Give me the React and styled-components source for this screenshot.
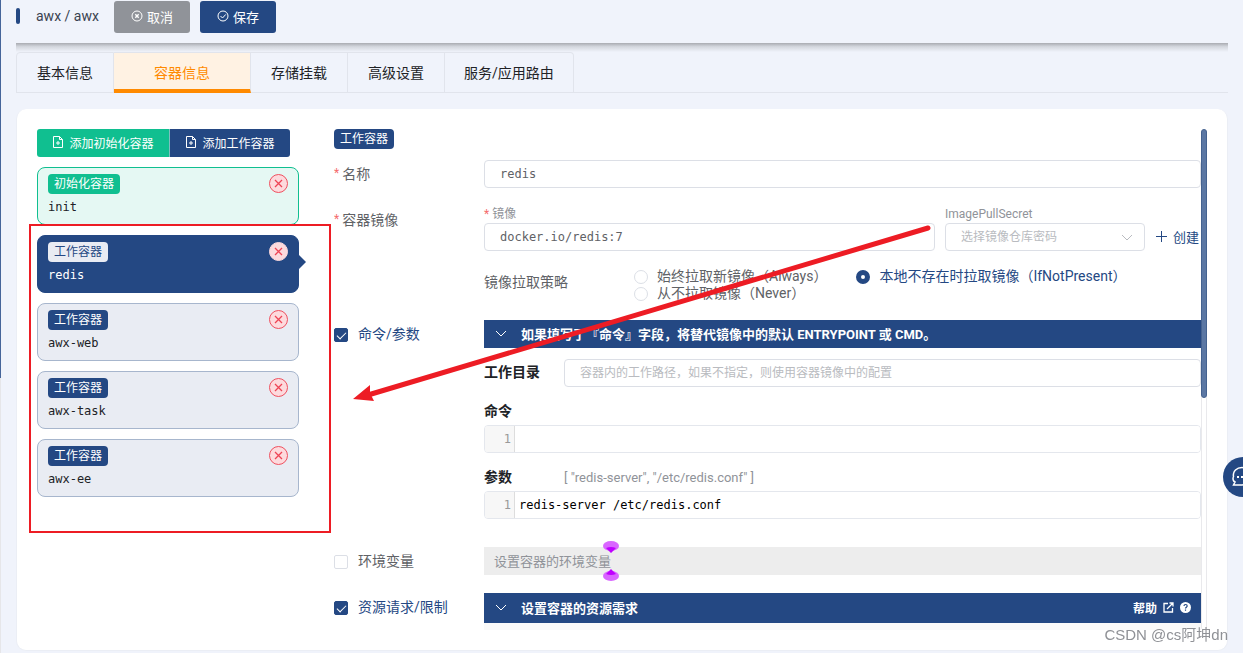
import React from 'react';
import { useState } from 'react';
import styled, { createGlobalStyle } from 'styled-components';

const NAVY = '#244883';
const GREEN = '#10bf90';
const LINE = '#dcdfe6';
const MONO = "'DejaVu Sans Mono', 'Noto Sans CJK SC', monospace";

const GlobalStyle = createGlobalStyle`
  * {
    box-sizing: border-box;
  }
  body {
    margin: 0;
    background-color: #f0f3fb;
    color: #202226;
    font-family: Roboto, 'Noto Sans CJK SC', sans-serif;
    font-size: 14px;
    overflow: hidden;
  }
  button,
  input,
  select {
    font-family: inherit;
    margin: 0;
  }
  button {
    border: none;
    padding: 0;
    cursor: pointer;
  }
`;

const Page = styled.div`
  display: flex;
  min-height: 100vh;
`;

const Rail = styled.div`
  width: 1px;
  background: linear-gradient(to bottom, #46659a 378px, #e6e6e9 378px);
`;

const Main = styled.main`
  flex: 1;
  min-width: 0;
  padding: 0 15px 0 15px;
`;

const Header = styled.header`
  display: flex;
  align-items: flex-start;
  height: 43px;
  padding-top: 1px;
`;

const Marker = styled.span`
  width: 4px;
  height: 16px;
  margin: 7px 16px 0 0;
  border-radius: 2px;
  background-color: ${NAVY};
`;

const Title = styled.h1`
  margin: 0 15px 0 0;
  font-size: 14px;
  font-weight: 400;
  line-height: 31px;
  color: #3a4250;
`;

const HeaderButton = styled.button`
  display: flex;
  align-items: center;
  justify-content: center;
  gap: 4px;
  width: 76px;
  height: 32px;
  margin-right: 10px;
  padding-bottom: 2px;
  border-radius: 3px;
  font-size: 13px;
  color: white;
  background-color: ${(props) => (props.$primary ? NAVY : '#909399')};
`;

const HeaderShadow = styled.div`
  height: 9px;
  background: linear-gradient(to bottom, #a9abb1, #d3d6dd 40%, #f0f3fb);
`;

const Tabs = styled.nav`
  display: flex;
  height: 41px;
  border-bottom: 1px solid #e1e4ec;
  > button {
    height: 41px;
    padding: 0 20px 2px;
    border: 1px solid #e1e4ec;
    border-left-width: 0;
    background-color: transparent;
    font-size: 14px;
    color: #202226;
    &:first-child {
      border-left-width: 1px;
      border-top-left-radius: 4px;
    }
    &:last-child {
      padding: 0 19px 2px;
      border-top-right-radius: 4px;
    }
    &.active {
      padding: 1px 40px 0;
      border-bottom: 4px solid #ff8a00;
      background-color: #fff2e3;
      color: #ff8a00;
    }
  }
`;

const Panel = styled.section`
  display: flex;
  margin-top: 16px;
  padding: 20px;
  border: 1px solid #ebeef5;
  border-top: 0;
  border-radius: 10px;
  background-color: white;
`;

const Side = styled.div`
  flex: none;
  width: 262px;
  margin-right: 35px;
`;

const AddButtons = styled.div`
  display: flex;
  margin-bottom: 10px;
`;

const AddButton = styled.button`
  display: flex;
  align-items: center;
  justify-content: center;
  gap: 5px;
  width: 120px;
  height: 28px;
  padding-bottom: 2px;
  font-size: 12px;
  color: white;
  white-space: nowrap;
  background-color: ${(props) => props.$color};
  &:first-child {
    width: 133px;
    border-right: 1px solid #7fbfc0;
    border-radius: 3px 0 0 3px;
  }
  &:last-child {
    border-radius: 0 3px 3px 0;
  }
`;

const ContainerList = styled.ul`
  display: flex;
  flex-direction: column;
  gap: 10px;
  margin: 0;
  padding: 0;
  list-style: none;
`;

const cardColors = {
  init: { bg: '#e5f8f3', line: GREEN, text: '#202226' },
  work: { bg: '#e9ecf3', line: '#a7b6cd', text: '#202226' },
  active: { bg: NAVY, line: NAVY, text: 'white' },
};

const ContainerCard = styled.li`
  position: relative;
  display: flex;
  justify-content: space-between;
  height: 58px;
  padding: 6px 10px;
  border: 1px solid ${(props) => cardColors[props.$kind].line};
  border-radius: 8px;
  background-color: ${(props) => cardColors[props.$kind].bg};
  color: ${(props) => cardColors[props.$kind].text};
  cursor: pointer;
  &.active::after {
    content: '';
    position: absolute;
    left: 100%;
    top: 18px;
    border: 8px solid transparent;
    border-left-color: ${NAVY};
    border-right-width: 0;
  }
`;

const CardName = styled.div`
  font-family: ${MONO};
  font-size: 12px;
  line-height: 26px;
`;

const Tag = styled.span`
  display: inline-block;
  height: 20px;
  padding: 0 6px;
  border-radius: 4px;
  font-size: 12px;
  line-height: 21px;
  vertical-align: top;
  color: ${(props) => (props.$light ? NAVY : 'white')};
  background-color: ${(props) =>
    props.$light ? '#e9ecf3' : props.$green ? GREEN : NAVY};
`;

const RemoveButton = styled.button`
  display: flex;
  align-items: center;
  justify-content: center;
  width: 19px;
  height: 19px;
  border: 1px solid ${(props) => (props.$plain ? '#fddadd' : '#f0505f')};
  border-radius: 50%;
  background-color: #fddadd;
`;

const FormView = styled.div`
  flex: 1;
  min-width: 0;
  overflow: hidden;
`;

const ScrollTrack = styled.div`
  flex: none;
  width: 6px;
  border: 1px solid #e9e9ec;
  border-width: 0 1px;
  border-radius: 3px;
  > div {
    width: 6px;
    height: 269px;
    margin-left: -1px;
    border: 1px solid #45628f;
    border-radius: 3px;
    background-color: #5b77a3;
  }
`;

const FormRow = styled.div`
  display: grid;
  grid-template-columns: 150px minmax(0, 1fr);
  margin-top: ${(props) => props.$top || 18}px;
`;

const RowLabel = styled.label`
  display: flex;
  align-items: center;
  height: 28px;
  padding-bottom: 2px;
  font-size: 14px;
  color: ${(props) => (props.$on ? NAVY : '#606266')};
  > input {
    margin: 3px 10px 0 0;
  }
`;

const Star = styled.span`
  margin-right: 3px;
  font-size: 12px;
  line-height: 14px;
  color: #f56c6c;
`;

const Input = styled.input`
  width: 100%;
  height: 28px;
  padding: 0 15px;
  border: 1px solid ${LINE};
  border-radius: 4px;
  outline: none;
  background-color: white;
  font-size: 12px;
  color: #606266;
  &.mono {
    font-family: ${MONO};
  }
  &::placeholder {
    color: #b9bbc0;
  }
`;

const ImageFields = styled.div`
  display: flex;
  align-items: flex-end;
`;

const Field = styled.div`
  flex: ${(props) => (props.$fixed ? 'none' : '1')};
  width: ${(props) => (props.$fixed ? '200px' : 'auto')};
  margin-right: 10px;
  > label {
    display: block;
    height: 17px;
    font-size: 12px;
    line-height: 16px;
    color: #909399;
  }
`;

const SelectBox = styled.div`
  display: flex;
  align-items: center;
  height: 28px;
  padding-right: 10px;
  border: 1px solid ${LINE};
  border-radius: 4px;
  > select {
    flex: 1;
    height: 26px;
    padding: 0 0 0 15px;
    border: none;
    outline: none;
    appearance: none;
    background: transparent;
    font-size: 12px;
    color: #b9bbc0;
  }
`;

const CreateButton = styled.button`
  display: flex;
  flex: none;
  align-items: center;
  gap: 4px;
  width: 46px;
  height: 28px;
  padding-bottom: 2px;
  background: transparent;
  font-size: 13px;
  color: ${NAVY};
  white-space: nowrap;
`;

const Policy = styled.div`
  display: grid;
  grid-template-columns: 150px minmax(0, 1fr);
  margin-top: 17px;
  color: #606266;
  > span {
    line-height: 28px;
  }
`;

const RadioGroup = styled.div`
  display: flex;
  flex-wrap: wrap;
  column-gap: 29px;
  > label {
    display: flex;
    align-items: center;
    gap: 9px;
    height: 17px;
    line-height: 17px;
    white-space: nowrap;
    &.checked {
      color: ${NAVY};
    }
  }
`;

const Radio = styled.input`
  width: 14px;
  height: 14px;
  border: 1px solid ${LINE};
  border-radius: 50%;
  appearance: none;
  background-color: white;
  &:checked {
    border: 5px solid ${NAVY};
  }
`;

const Checkbox = styled.input`
  display: flex;
  justify-content: center;
  width: 14px;
  height: 14px;
  border: 1px solid ${LINE};
  border-radius: 2px;
  appearance: none;
  background-color: white;
  &:checked {
    border-color: ${NAVY};
    background-color: ${NAVY};
  }
  &:checked::after {
    content: '';
    width: 4px;
    height: 8px;
    margin-top: 1px;
    border: solid white;
    border-width: 0 1px 1px 0;
    transform: rotate(45deg);
  }
`;

const SectionBar = styled.div`
  display: flex;
  align-items: center;
  height: ${(props) => (props.$tall ? 30 : 28)}px;
  padding: 0 10px 2px;
  background-color: ${(props) => (props.$off ? '#ededed' : NAVY)};
  color: ${(props) => (props.$off ? '#909399' : 'white')};
  font-size: 13px;
  > button {
    display: flex;
    flex: 1;
    align-items: center;
    gap: 13px;
    background: transparent;
    font-size: 13px;
    font-weight: 700;
    color: white;
    white-space: nowrap;
  }
  > a {
    display: flex;
    align-items: center;
    gap: 6px;
    font-size: 12px;
    font-weight: 700;
    color: white;
    text-decoration: none;
  }
`;

const SectionEnd = styled.div`
  height: 7px;
  background-color: #f9f9f9;
`;

const WorkDir = styled.div`
  display: grid;
  grid-template-columns: 80px minmax(0, 1fr);
  margin-top: 11px;
`;

const BoldLabel = styled.label`
  font-size: 14px;
  font-weight: 700;
  line-height: 27px;
`;

const EditorHead = styled.div`
  display: grid;
  grid-template-columns: 80px minmax(0, 1fr);
  height: 28px;
  margin-top: 10px;
  font-size: 13px;
  line-height: 29px;
  color: #909399;
  > label {
    line-height: 28px;
    color: #202226;
  }
`;

const EditorBox = styled.div`
  display: flex;
  height: 28px;
  border: 1px solid #e4e7ed;
  border-radius: 4px;
  font-family: ${MONO};
  font-size: 12px;
  line-height: 26px;
  overflow: hidden;
  &.last {
    margin-bottom: 10px;
  }
  > span {
    width: 30px;
    padding-right: 3px;
    border-right: 1px solid #dddddd;
    background-color: #f7f7f7;
    text-align: right;
    color: #999999;
  }
  > input {
    flex: 1;
    padding: 0 4px;
    border: none;
    outline: none;
    font-family: ${MONO};
    font-size: 12px;
    color: black;
  }
`;

const Chat = styled.button`
  position: fixed;
  right: -20px;
  top: 457px;
  width: 40px;
  height: 40px;
  padding: 2px 0 0 7px;
  border-radius: 50%;
  background-color: ${NAVY};
  text-align: left;
`;

const Watermark = styled.div`
  position: fixed;
  right: 15px;
  bottom: 8px;
  font-family: 'Liberation Sans', 'Noto Sans CJK SC', sans-serif;
  font-size: 15px;
  line-height: 20px;
  color: #8f9196;
`;

const Marks = styled.svg`
  position: absolute;
  left: 0;
  top: 0;
  pointer-events: none;
`;

const CircleIcon = ({ check }) => (
  <svg width="12" height="12" viewBox="0 0 12 12" fill="none" stroke="white">
    <circle cx="6" cy="6" r="5" />
    {check ? (
      <path d="M3.5 6l2 2 3.3-3.6" />
    ) : (
      <path d="M4.3 4.3l3.4 3.4M7.7 4.3L4.3 7.7" strokeWidth="1.4" />
    )}
  </svg>
);

const FileAddIcon = () => (
  <svg width="12" height="12" viewBox="0 0 12 12" fill="none" stroke="white">
    <path d="M1.500 .5h6l3 3v8h-9zM7.500 .5v3h3M6 5v4M4 7h4" />
  </svg>
);

const Chevron = ({ color = 'white' }) => (
  <svg width="14" height="14" viewBox="0 0 14 14" fill="none" stroke={color}>
    <path d="M2 5l5 5 5-5" />
  </svg>
);

const containers = [
  { name: 'init', kind: 'init' },
  { name: 'redis', kind: 'work' },
  { name: 'awx-web', kind: 'work' },
  { name: 'awx-task', kind: 'work' },
  { name: 'awx-ee', kind: 'work' },
];

const policies = [
  { value: 'Always', text: '始终拉取新镜像（Always）' },
  { value: 'IfNotPresent', text: '本地不存在时拉取镜像（IfNotPresent）' },
  { value: 'Never', text: '从不拉取镜像（Never）' },
];

const tabs = ['基本信息', '容器信息', '存储挂载', '高级设置', '服务/应用路由'];

function ContainerItem({ item, active, onSelect }) {
  const isInit = item.kind === 'init';

  return (
    <ContainerCard
      $kind={active ? 'active' : item.kind}
      className={active ? 'active' : ''}
      onClick={() => onSelect(item.name)}
    >
      <div>
        <Tag $green={isInit} $light={active}>
          {isInit ? '初始化容器' : '工作容器'}
        </Tag>
        <CardName>{item.name}</CardName>
      </div>
      <RemoveButton $plain={active} aria-label={`删除 ${item.name}`}>
        <svg width="9" height="9" viewBox="0 0 9 9" stroke="#ee4455">
          <path d="M1 1l7 7M8 1L1 8" strokeWidth="1.3" />
        </svg>
      </RemoveButton>
    </ContainerCard>
  );
}

function CommandEditor({ id, label, hint, value, last }) {
  return (
    <>
      <EditorHead>
        <BoldLabel htmlFor={id}>{label}</BoldLabel>
        {hint && <span>{hint}</span>}
      </EditorHead>
      <EditorBox className={last ? 'last' : ''}>
        <span>1</span>
        <input id={id} defaultValue={value} />
      </EditorBox>
    </>
  );
}

function ContainerForm() {
  const [policy, setPolicy] = useState('IfNotPresent');

  return (
    <FormView>
      <Tag>工作容器</Tag>
      <FormRow $top={11}>
        <RowLabel htmlFor="name">
          <Star>*</Star>名称
        </RowLabel>
        <Input id="name" className="mono" defaultValue="redis" />
      </FormRow>
      <FormRow>
        <RowLabel htmlFor="image">
          <Star>*</Star>容器镜像
        </RowLabel>
        <div>
          <ImageFields>
            <Field>
              <label htmlFor="image">
                <Star>*</Star>镜像
              </label>
              <Input
                id="image"
                className="mono"
                defaultValue="docker.io/redis:7"
              />
            </Field>
            <Field $fixed>
              <label htmlFor="secret">ImagePullSecret</label>
              <SelectBox>
                <select id="secret">
                  <option>选择镜像仓库密码</option>
                </select>
                <Chevron color="#b9bbc0" />
              </SelectBox>
            </Field>
            <CreateButton>
              <svg width="14" height="14" viewBox="0 0 14 14" stroke={NAVY}>
                <path d="M6.500 2v11M1 7.500h11" />
              </svg>
              创建
            </CreateButton>
          </ImageFields>
          <Policy>
            <span>镜像拉取策略</span>
            <RadioGroup>
              {policies.map(({ value, text }) => (
                <label
                  key={value}
                  className={policy === value ? 'checked' : ''}
                >
                  <Radio
                    type="radio"
                    name="policy"
                    value={value}
                    checked={policy === value}
                    onChange={(e) => setPolicy(e.target.value)}
                  />
                  {text}
                </label>
              ))}
            </RadioGroup>
          </Policy>
        </div>
      </FormRow>
      <FormRow>
        <RowLabel $on>
          <Checkbox type="checkbox" defaultChecked />
          命令/参数
        </RowLabel>
        <div>
          <SectionBar>
            <button>
              <Chevron />
              如果填写了『命令』字段，将替代镜像中的默认 ENTRYPOINT 或 CMD。
            </button>
          </SectionBar>
          <WorkDir>
            <BoldLabel htmlFor="workdir">工作目录</BoldLabel>
            <Input
              id="workdir"
              placeholder="容器内的工作路径，如果不指定，则使用容器镜像中的配置"
            />
          </WorkDir>
          <CommandEditor id="command" label="命令" />
          <CommandEditor
            id="args"
            label="参数"
            hint={'[ "redis-server", "/etc/redis.conf" ]'}
            value="redis-server /etc/redis.conf"
            last
          />
        </div>
      </FormRow>
      <FormRow>
        <RowLabel>
          <Checkbox type="checkbox" />
          环境变量
        </RowLabel>
        <SectionBar $off>设置容器的环境变量</SectionBar>
      </FormRow>
      <FormRow>
        <RowLabel $on>
          <Checkbox type="checkbox" defaultChecked />
          资源请求/限制
        </RowLabel>
        <div>
          <SectionBar $tall>
            <button>
              <Chevron />
              设置容器的资源需求
            </button>
            <a href="#help">
              帮助
              <svg width="11" height="11" viewBox="0 0 11 11" fill="none">
                <path
                  d="M5 1.500H1v8.500h8.500V6M4 7l5.500-5.500M6.500 1H10v3.500"
                  stroke="white"
                  strokeWidth="1.3"
                />
              </svg>
              <svg width="11" height="11" viewBox="0 0 11 11" fill="none">
                <circle cx="5.500" cy="5.500" r="5.500" fill="white" />
                <path
                  d="M4 4c0-2 3.200-2 3.200 0 0 1.200-1.700 1.200-1.700 2.500M5.500 7.500v1.200"
                  stroke={NAVY}
                  strokeWidth="1.200"
                />
              </svg>
            </a>
          </SectionBar>
          <SectionEnd />
        </div>
      </FormRow>
    </FormView>
  );
}

function App() {
  const [tab, setTab] = useState('容器信息');
  const [current, setCurrent] = useState('redis');

  return (
    <>
      <GlobalStyle />
      <Page>
        <Rail />
        <Main>
          <Header>
            <Marker />
            <Title>awx / awx</Title>
            <HeaderButton>
              <CircleIcon />
              取消
            </HeaderButton>
            <HeaderButton $primary>
              <CircleIcon check />
              保存
            </HeaderButton>
          </Header>
          <HeaderShadow />
          <Tabs>
            {tabs.map((name) => (
              <button
                key={name}
                className={tab === name ? 'active' : ''}
                onClick={() => setTab(name)}
              >
                {name}
              </button>
            ))}
          </Tabs>
          <Panel>
            <Side>
              <AddButtons>
                <AddButton $color={GREEN}>
                  <FileAddIcon />
                  添加初始化容器
                </AddButton>
                <AddButton $color={NAVY}>
                  <FileAddIcon />
                  添加工作容器
                </AddButton>
              </AddButtons>
              <ContainerList>
                {containers.map((item) => (
                  <ContainerItem
                    key={item.name}
                    item={item}
                    active={item.name === current}
                    onSelect={setCurrent}
                  />
                ))}
              </ContainerList>
            </Side>
            <ContainerForm />
            <ScrollTrack>
              <div />
            </ScrollTrack>
          </Panel>
        </Main>
      </Page>
      <Chat aria-label="在线客服">
        <svg width="24" height="24" viewBox="0 0 24 24" fill="none">
          <path
            d="M3.500 12C2.500 6 7 2.500 12 2.500s9 4 9 9-4 8.500-9 8.500H3.500l1.500-3c-2-1-2.500-3.500-1.500-5"
            stroke="white"
            strokeWidth="1.500"
          />
          <path d="M7 12h2M11 12h2" stroke="white" strokeWidth="2" />
        </svg>
      </Chat>
      {/* hand-drawn notes over the page */}
      <Marks width="1000" height="600" viewBox="0 0 1000 600">
        <rect
          x="30"
          y="225"
          width="300"
          height="307"
          fill="none"
          stroke="#ed1c24"
          strokeWidth="2"
        />
        <path
          d="M928 228L368 395"
          stroke="#ed1c24"
          strokeWidth="5"
          strokeLinecap="round"
        />
        <path d="M353 399l17-14 0 8 4 8z" fill="#ed1c24" />
        <g fill="#d966ff">
          <ellipse cx="611" cy="546" rx="8" ry="5" />
          <ellipse cx="611" cy="576" rx="8" ry="5" />
        </g>
        <path
          d="M606 548q5-2 10 0l-5 5zM606 574q5 2 10 0l-5-5z"
          fill="#bf00ff"
        />
      </Marks>
      <Watermark>CSDN @cs阿坤dn</Watermark>
    </>
  );
}

export default App;
